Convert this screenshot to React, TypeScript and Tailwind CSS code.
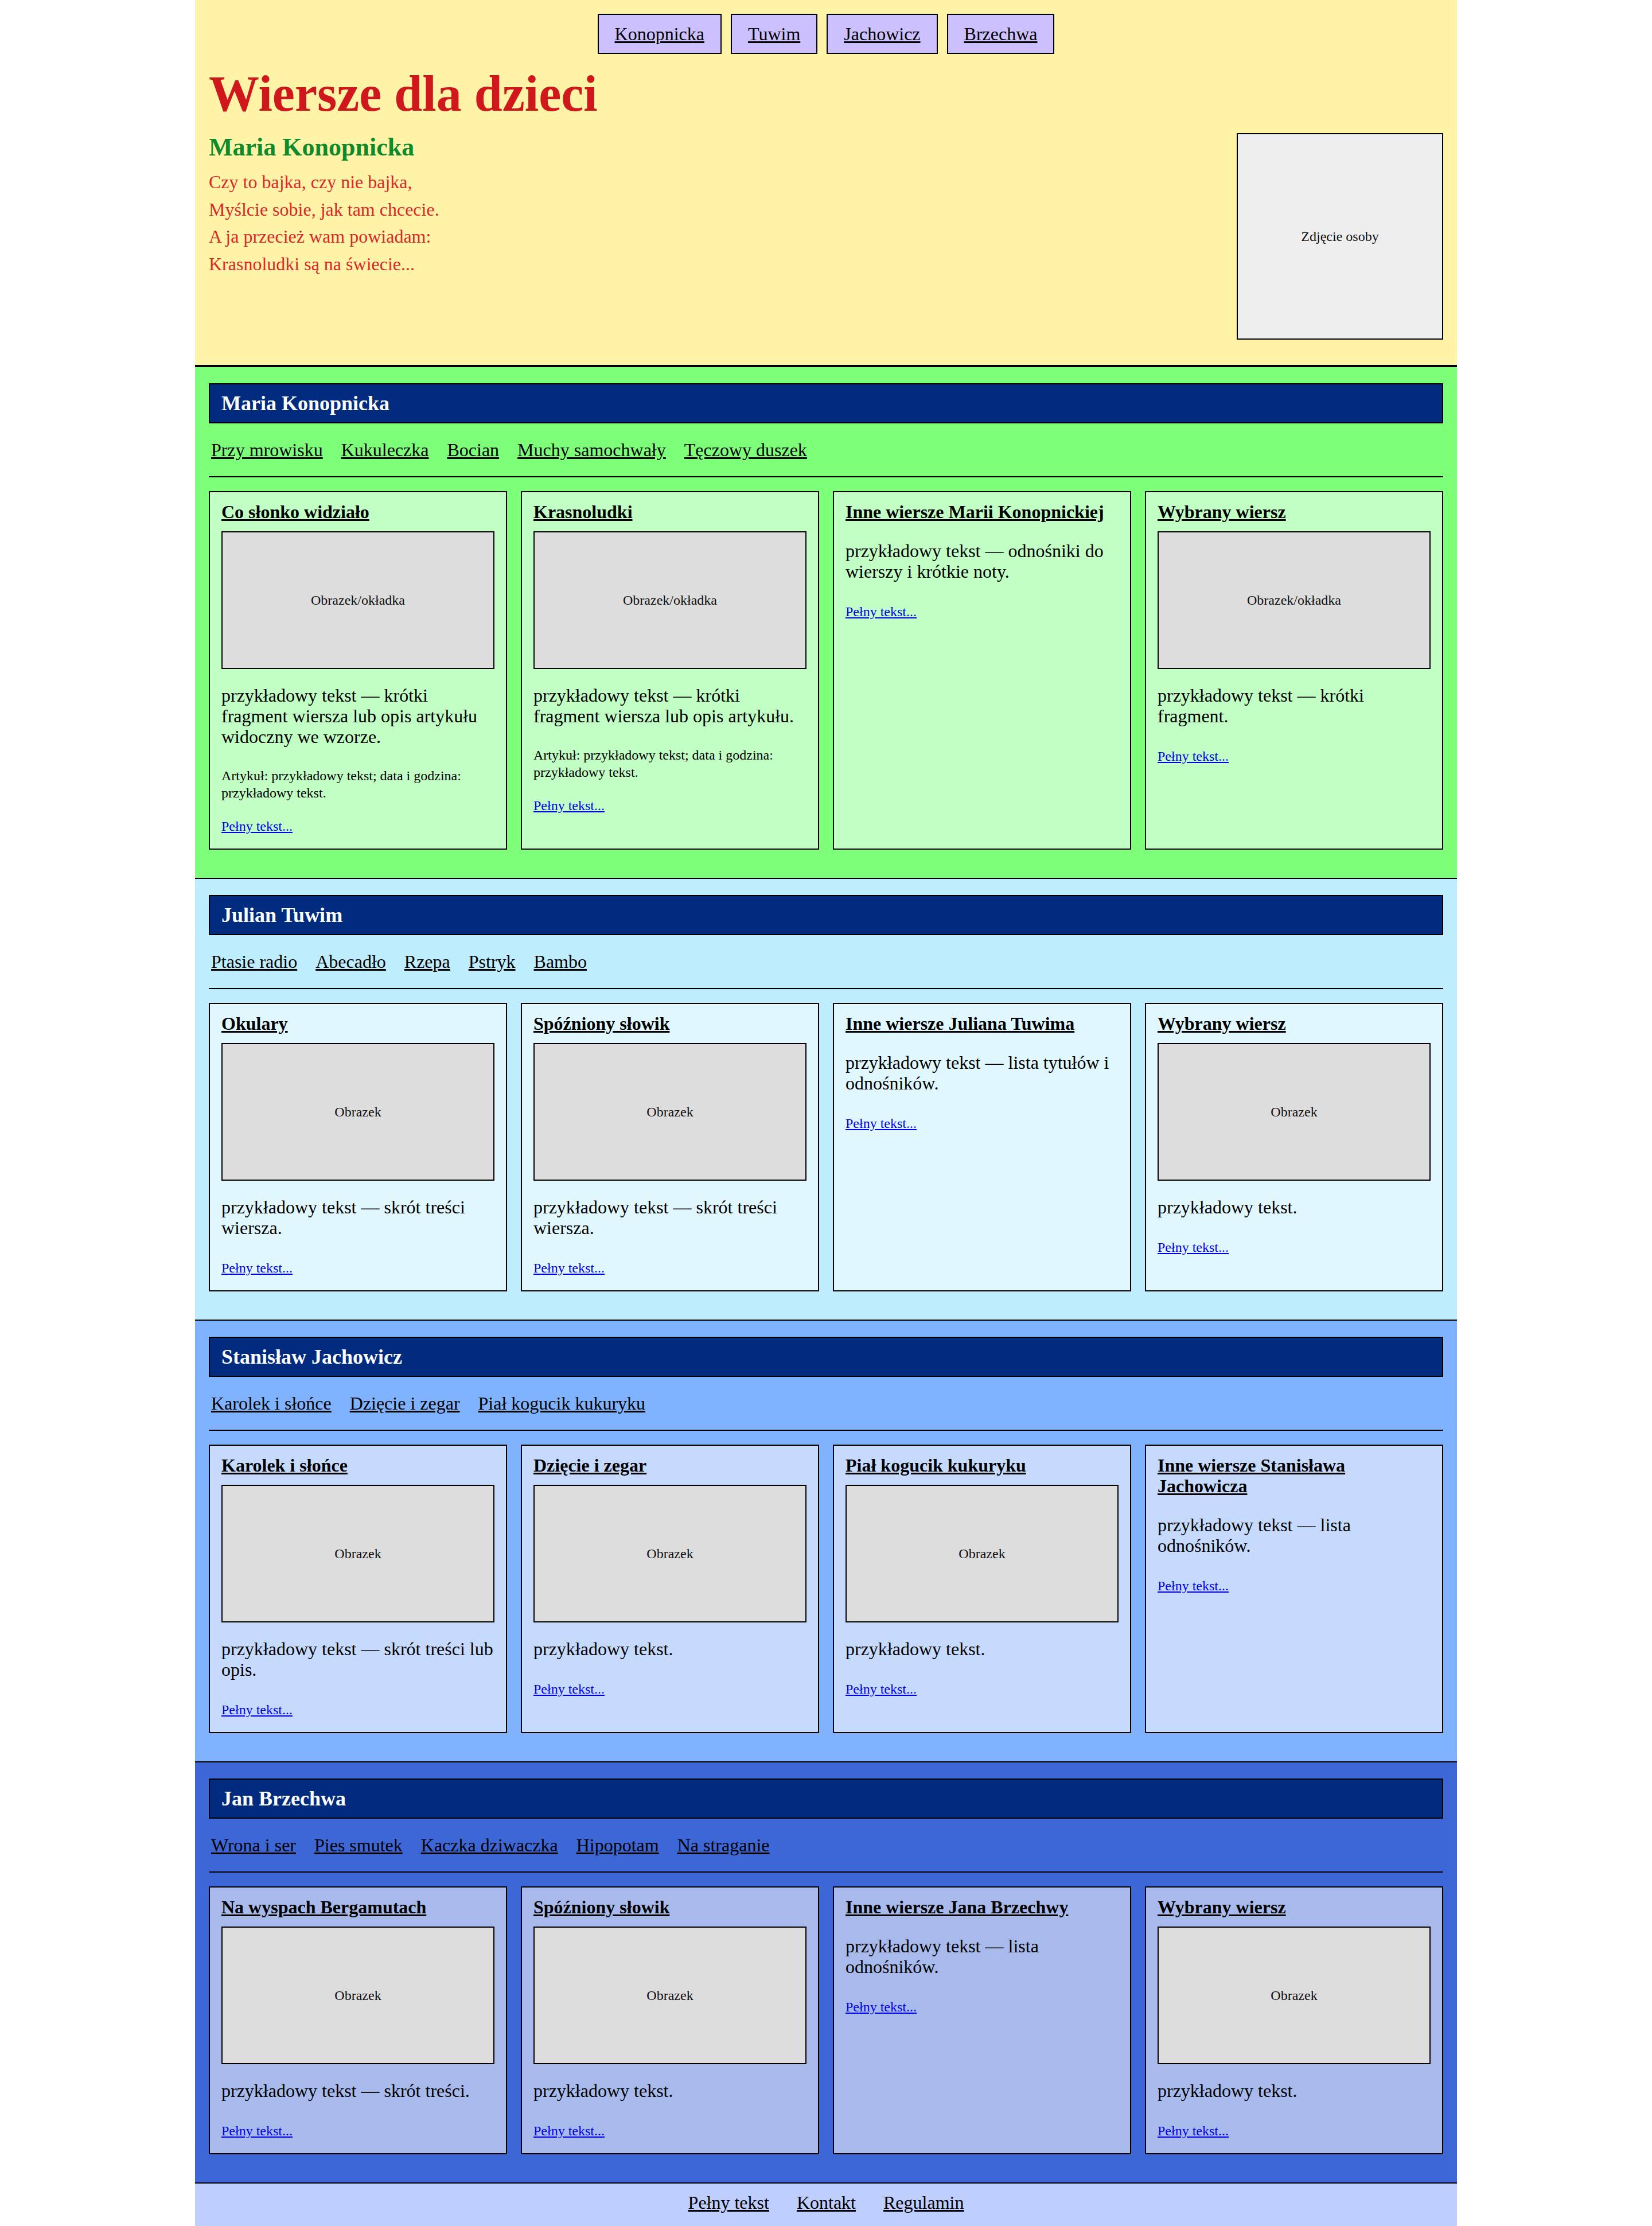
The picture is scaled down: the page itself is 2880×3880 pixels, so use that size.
import React from "react";

type Card = {
  title: string;
  img?: string;
  text: string;
  meta?: string;
};

type Section = {
  name: string;
  bg: string;
  cardBg: string;
  links: string[];
  cards: Card[];
};

const META = "Artykuł: przykładowy tekst; data i godzina: przykładowy tekst.";

const sections: Section[] = [
  {
    name: "Maria Konopnicka",
    bg: "bg-[#7dff7a]",
    cardBg: "bg-[#c2ffc4]",
    links: ["Przy mrowisku", "Kukuleczka", "Bocian", "Muchy samochwały", "Tęczowy duszek"],
    cards: [
      {
        title: "Co słonko widziało",
        img: "Obrazek/okładka",
        text: "przykładowy tekst — krótki fragment wiersza lub opis artykułu widoczny we wzorze.",
        meta: META,
      },
      {
        title: "Krasnoludki",
        img: "Obrazek/okładka",
        text: "przykładowy tekst — krótki fragment wiersza lub opis artykułu.",
        meta: META,
      },
      {
        title: "Inne wiersze Marii Konopnickiej",
        text: "przykładowy tekst — odnośniki do wierszy i krótkie noty.",
      },
      {
        title: "Wybrany wiersz",
        img: "Obrazek/okładka",
        text: "przykładowy tekst — krótki fragment.",
      },
    ],
  },
  {
    name: "Julian Tuwim",
    bg: "bg-[#beeefe]",
    cardBg: "bg-[#e0f7fe]",
    links: ["Ptasie radio", "Abecadło", "Rzepa", "Pstryk", "Bambo"],
    cards: [
      { title: "Okulary", img: "Obrazek", text: "przykładowy tekst — skrót treści wiersza." },
      { title: "Spóźniony słowik", img: "Obrazek", text: "przykładowy tekst — skrót treści wiersza." },
      { title: "Inne wiersze Juliana Tuwima", text: "przykładowy tekst — lista tytułów i odnośników." },
      { title: "Wybrany wiersz", img: "Obrazek", text: "przykładowy tekst." },
    ],
  },
  {
    name: "Stanisław Jachowicz",
    bg: "bg-[#80b3ff]",
    cardBg: "bg-[#c6dafe]",
    links: ["Karolek i słońce", "Dzięcie i zegar", "Piał kogucik kukuryku"],
    cards: [
      { title: "Karolek i słońce", img: "Obrazek", text: "przykładowy tekst — skrót treści lub opis." },
      { title: "Dzięcie i zegar", img: "Obrazek", text: "przykładowy tekst." },
      { title: "Piał kogucik kukuryku", img: "Obrazek", text: "przykładowy tekst." },
      { title: "Inne wiersze Stanisława Jachowicza", text: "przykładowy tekst — lista odnośników." },
    ],
  },
  {
    name: "Jan Brzechwa",
    bg: "bg-[#3d66d6]",
    cardBg: "bg-[#a8baec]",
    links: ["Wrona i ser", "Pies smutek", "Kaczka dziwaczka", "Hipopotam", "Na straganie"],
    cards: [
      { title: "Na wyspach Bergamutach", img: "Obrazek", text: "przykładowy tekst — skrót treści." },
      { title: "Spóźniony słowik", img: "Obrazek", text: "przykładowy tekst." },
      { title: "Inne wiersze Jana Brzechwy", text: "przykładowy tekst — lista odnośników." },
      { title: "Wybrany wiersz", img: "Obrazek", text: "przykładowy tekst." },
    ],
  },
];

function CardBox({ card, bg }: { card: Card; bg: string }) {
  return (
    <div className={`border-2 border-black ${bg} px-5 pt-4 pb-[24px]`}>
      <h3 className="text-[32px] font-bold leading-[36px]">
        <a href="#" className="text-black underline">
          {card.title}
        </a>
      </h3>
      {card.img && (
        <div className="mt-4 flex h-[240px] items-center justify-center border-2 border-black bg-[#dddddd] text-[24px] leading-[30px] text-[#111111]">
          {card.img}
        </div>
      )}
      <p className={`${card.img ? "mt-[28px]" : "mt-[32px]"} text-[32px] leading-[36px] text-black`}>
        {card.text}
      </p>
      {card.meta && <p className="mt-[35px] text-[24px] leading-[30px] text-black">{card.meta}</p>}
      <p className={`${card.meta ? "mt-[28px]" : "mt-[37px]"} text-[24px] leading-[30px]`}>
        <a href="#" className="text-[#0000ee] underline">
          Pełny tekst...
        </a>
      </p>
    </div>
  );
}

function SectionBlock({ s }: { s: Section }) {
  return (
    <section className={`${s.bg} border-b-2 border-black px-6 pt-7 pb-[49px]`}>
      <h2 className="border-2 border-black bg-[#002b7f] px-5 py-3 text-[36px] font-bold leading-[42px] text-white">
        {s.name}
      </h2>
      <nav className="mt-7 flex flex-wrap gap-6 border-b-2 border-black pb-7">
        {s.links.map((l) => (
          <a key={l} href="#" className="px-1 text-[32px] leading-[36px] text-black underline">
            {l}
          </a>
        ))}
      </nav>
      <div className="mt-6 grid grid-cols-4 gap-6">
        {s.cards.map((c, i) => (
          <CardBox key={i} card={c} bg={s.cardBg} />
        ))}
      </div>
    </section>
  );
}

export default function App() {
  return (
    <div className="min-h-screen bg-white font-['Liberation_Serif',serif] text-black">
      <div className="mx-auto flex min-h-screen w-[2200px] flex-col">
        <header className="border-b-4 border-black bg-[#fff3a8] px-6 pt-6 pb-[44px]">
          <nav className="flex justify-center gap-4">
            {["Konopnicka", "Tuwim", "Jachowicz", "Brzechwa"].map((n) => (
              <a
                key={n}
                href="#"
                className="border-2 border-black bg-[#ccc0ff] px-7 py-[15px] text-[32px] leading-[36px] text-black underline"
              >
                {n}
              </a>
            ))}
          </nav>
          <h1 className="mt-[22px] text-[88px] font-bold leading-[96px] text-[#d0181c]">Wiersze dla dzieci</h1>
          <div className="mt-5 flex items-start justify-between">
            <div>
              <h2 className="text-[44px] font-bold leading-[50px] text-[#0f8a2b]">Maria Konopnicka</h2>
              <div className="mt-3 text-[32px] leading-[47.5px] text-[#dc2828]">
                <p>Czy to bajka, czy nie bajka,</p>
                <p>Myślcie sobie, jak tam chcecie.</p>
                <p>A ja przecież wam powiadam:</p>
                <p>Krasnoludki są na świecie...</p>
              </div>
            </div>
            <div className="flex h-[360px] w-[360px] items-center justify-center border-2 border-black bg-[#eeeeee] text-[24px] leading-[30px] text-[#111111]">
              Zdjęcie osoby
            </div>
          </div>
        </header>
        {sections.map((s) => (
          <SectionBlock key={s.name} s={s} />
        ))}
        <footer className="flex flex-1 justify-center gap-12 bg-[#beceff] pt-[15px] text-[32px] leading-[36px]">
          <a href="#" className="text-black underline">
            Pełny tekst
          </a>
          <a href="#" className="text-black underline">
            Kontakt
          </a>
          <a href="#" className="text-black underline">
            Regulamin
          </a>
        </footer>
      </div>
    </div>
  );
}
